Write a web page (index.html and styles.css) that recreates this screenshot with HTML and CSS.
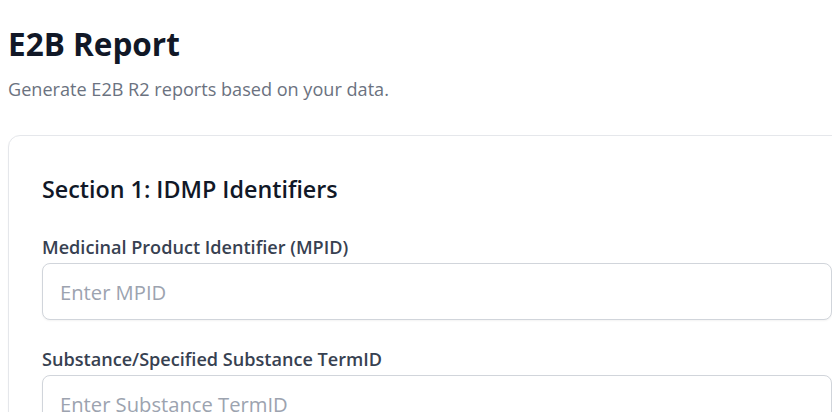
FILE: index.html
```html
<!DOCTYPE html>
<html lang="en">
<head>
<meta charset="utf-8">
<title>E2B Report</title>
<link rel="stylesheet" href="styles.css">
</head>
<body>
<main class="page">
  <header class="page-header">
    <h1 class="page-title">E2B Report</h1>
    <p class="page-subtitle">Generate E2B R2 reports based on your data.</p>
  </header>
  <section class="card">
    <h2 class="section-title">Section 1: IDMP Identifiers</h2>
    <div class="field">
      <label class="field-label" for="mpid">Medicinal Product Identifier (MPID)</label>
      <input class="field-input" id="mpid" type="text" placeholder="Enter MPID">
    </div>
    <div class="field">
      <label class="field-label" for="termid">Substance/Specified Substance TermID</label>
      <input class="field-input" id="termid" type="text" placeholder="Enter Substance TermID">
    </div>
  </section>
</main>
</body>
</html>
```

FILE: styles.css
```css
* { box-sizing: border-box; }

html, body {
  margin: 0;
  padding: 0;
  background: #ffffff;
  overflow: hidden;
}

body {
  font-family: "Open Sans", "Noto Sans", "Liberation Sans", sans-serif;
  color: #111827;
}

.page {
  padding: 26px 0 0 8px;
  width: 866px;
}

.page-title {
  margin: 0;
  font-size: 31.5px;
  line-height: 36px;
  font-weight: 700;
  color: #111827;
}

.page-subtitle {
  margin: 15px 0 0;
  font-size: 18.1px;
  line-height: 24px;
  color: #6b7280;
}

.card {
  margin-top: 34px;
  width: 858px;
  background: #ffffff;
  border: 1px solid #e5e7eb;
  border-radius: 12px;
  box-shadow: 0 1px 2px rgba(0, 0, 0, 0.04);
  padding: 38px 33px 33px;
}

.section-title {
  margin: 0 0 31px;
  font-size: 23.3px;
  line-height: 30px;
  font-weight: 600;
  color: #111827;
}

.field {
  display: flex;
  flex-direction: column;
  gap: 4px;
  margin-bottom: 27px;
}

.field-label {
  font-size: 18.1px;
  line-height: 24px;
  font-weight: 600;
  color: #374151;
}

.field-input {
  width: 100%;
  height: 57px;
  padding: 0 17px;
  border: 1px solid #d1d5db;
  border-radius: 8px;
  font-family: inherit;
  font-size: 20.2px;
  color: #111827;
  background: #ffffff;
  box-shadow: 0 1px 2px rgba(0, 0, 0, 0.05);
  outline: none;
}

.field-input::placeholder {
  color: #9ca3af;
}
```
